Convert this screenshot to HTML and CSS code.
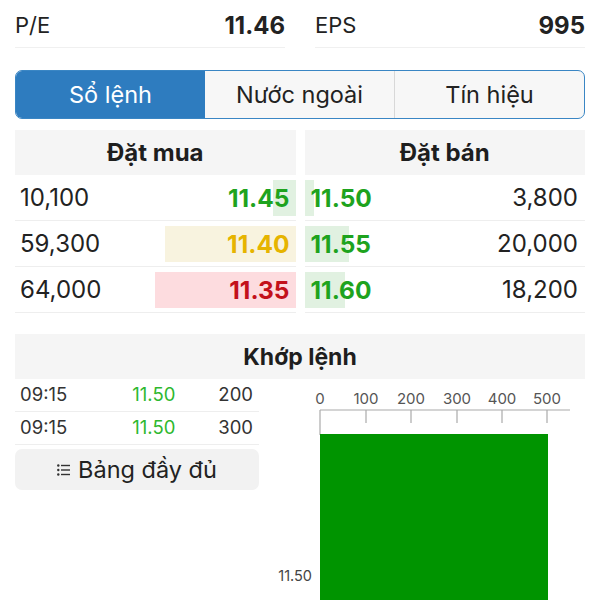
FILE: index.html
```html
<!DOCTYPE html>
<html lang="vi">
<head>
<meta charset="utf-8">
<title>Sổ lệnh</title>
<link rel="stylesheet" href="styles.css">
</head>
<body>
<div class="page">
  <div class="stats">
    <div class="stat"><span class="label">P/E</span><span class="value">11.46</span></div>
    <div class="stat"><span class="label">EPS</span><span class="value">995</span></div>
  </div>

  <div class="tabs">
    <div class="tab active">Sổ lệnh</div>
    <div class="tab">Nước ngoài</div>
    <div class="tab">Tín hiệu</div>
  </div>

  <div class="book">
    <div class="side bid">
      <div class="head">Đặt mua</div>
      <div class="row bar-green" style="--w:23px"><span class="qty">10,100</span><span class="price up">11.45</span></div>
      <div class="row bar-yellow" style="--w:131px"><span class="qty">59,300</span><span class="price ref">11.40</span></div>
      <div class="row bar-red" style="--w:141px"><span class="qty">64,000</span><span class="price down">11.35</span></div>
    </div>
    <div class="side ask">
      <div class="head">Đặt bán</div>
      <div class="row bar-green" style="--w:9px"><span class="price up">11.50</span><span class="qty">3,800</span></div>
      <div class="row bar-green" style="--w:44px"><span class="price up">11.55</span><span class="qty">20,000</span></div>
      <div class="row bar-green" style="--w:40px"><span class="price up">11.60</span><span class="qty">18,200</span></div>
    </div>
  </div>

  <div class="match">
    <div class="head">Khớp lệnh</div>
    <div class="match-body">
      <div class="trades">
        <div class="trade"><span class="time">09:15</span><span class="tp">11.50</span><span class="tq">200</span></div>
        <div class="trade"><span class="time">09:15</span><span class="tp">11.50</span><span class="tq">300</span></div>
        <button class="full">
          <svg class="list-icon" width="13" height="12" viewBox="0 0 13 12">
            <circle cx="1.3" cy="1.5" r="1.2" fill="#333"/>
            <circle cx="1.3" cy="6" r="1.2" fill="#333"/>
            <circle cx="1.3" cy="10.5" r="1.2" fill="#333"/>
            <rect x="4" y="0.8" width="9" height="1.4" fill="#333"/>
            <rect x="4" y="5.3" width="9" height="1.4" fill="#333"/>
            <rect x="4" y="9.8" width="9" height="1.4" fill="#333"/>
          </svg>
          <span>Bảng đầy đủ</span>
        </button>
      </div>
      <svg class="chart" width="315" height="222" viewBox="0 0 315 222">
        <g class="axis-labels" font-size="15" fill="#555" text-anchor="middle">
          <text x="50" y="25">0</text>
          <text x="96" y="25">100</text>
          <text x="141" y="25">200</text>
          <text x="187" y="25">300</text>
          <text x="232" y="25">400</text>
          <text x="277" y="25">500</text>
        </g>
        <g stroke="#aaa" stroke-width="1.2">
          <line x1="50" y1="31" x2="300" y2="31"/>
          <line x1="50" y1="31" x2="50" y2="56"/>
          <line x1="96" y1="31" x2="96" y2="44"/>
          <line x1="141" y1="31" x2="141" y2="44"/>
          <line x1="187" y1="31" x2="187" y2="44"/>
          <line x1="232" y1="31" x2="232" y2="44"/>
          <line x1="277" y1="31" x2="277" y2="44"/>
        </g>
        <rect x="50" y="55" width="228" height="170" fill="#009400"/>
        <text x="42" y="202" font-size="14.5" fill="#444" text-anchor="end">11.50</text>
      </svg>
    </div>
  </div>
</div>
</body>
</html>
```

FILE: styles.css
```css
* { box-sizing: border-box; }

html, body {
  margin: 0;
  padding: 0;
  background: #ffffff;
}

body {
  font-family: "Inter", "Roboto", sans-serif;
  color: #222;
  width: 600px;
  height: 600px;
  overflow: hidden;
}

.page {
  padding: 0 15px;
}

/* stats */
.stats {
  display: flex;
  gap: 30px;
}

.stat {
  flex: 1;
  height: 48px;
  display: flex;
  justify-content: space-between;
  align-items: center;
  border-bottom: 1px solid #f0f0f0;
  padding-top: 3px;
}

.stat .label {
  font-size: 22px;
  color: #222;
}

.stat .value {
  font-size: 24px;
  font-weight: 700;
  color: #222;
}

/* tabs */
.tabs {
  margin-top: 22px;
  display: flex;
  height: 49px;
  border: 1.5px solid #3a86c4;
  border-radius: 7px;
  overflow: hidden;
  background: #f7f7f7;
}

.tab {
  flex: 1;
  display: flex;
  align-items: center;
  justify-content: center;
  font-size: 23.5px;
  color: #222;
}

.tab + .tab {
  border-left: 1px solid #d8d8d8;
}

.tab.active {
  background: #2e7cbf;
  color: #fff;
}

.tab.active + .tab {
  border-left: none;
}

/* order book */
.book {
  margin-top: 11px;
  display: grid;
  grid-template-columns: 1fr 1fr;
  gap: 9px;
}

.head {
  height: 45px;
  background: #f5f5f5;
  display: flex;
  align-items: center;
  justify-content: center;
  font-size: 24px;
  font-weight: 700;
  color: #1e1e1e;
}

.row {
  height: 46px;
  border-bottom: 1px solid #eeeeee;
  display: flex;
  justify-content: space-between;
  align-items: center;
  font-size: 24px;
  background-repeat: no-repeat;
  background-size: var(--w) 36px;
}

.bid .row {
  background-position: right center;
  padding: 0 6px 0 5px;
}

.ask .row {
  background-position: left center;
  padding: 0 7px 0 6px;
}

.bar-green { background-image: linear-gradient(#e1f1e1, #e1f1e1); }
.bar-yellow { background-image: linear-gradient(#f8f3df, #f8f3df); }
.bar-red { background-image: linear-gradient(#fddcdf, #fddcdf); }

.qty {
  color: #222;
}

.price {
  font-weight: 700;
  font-size: 24.5px;
}

.up { color: #1ea31e; }
.ref { color: #e6b400; }
.down { color: #c3111b; }

/* match */
.match {
  margin-top: 21px;
}

.match .head {
  font-size: 23px;
}

.match-body {
  display: flex;
  gap: 11px;
}

.trades {
  width: 244px;
  flex: none;
}

.trade {
  display: grid;
  grid-template-columns: 1fr 1fr 1fr;
  height: 33px;
  align-items: center;
  padding: 0 6px 2px 5px;
  border-bottom: 1px solid #eeeeee;
  font-size: 18.5px;
  color: #333;
}

.trade .tp {
  text-align: right;
  color: #2eb82e;
}

.trade .tq {
  text-align: right;
}

.full {
  margin-top: 4px;
  width: 100%;
  height: 41px;
  border: none;
  border-radius: 7px;
  background: #f2f2f2;
  display: flex;
  align-items: center;
  justify-content: center;
  gap: 8px;
  font-family: inherit;
  font-size: 23.5px;
  color: #222;
  padding: 0;
}

.list-icon {
  display: block;
}

.chart {
  display: block;
  flex: none;
  font-family: "Inter", "Roboto", sans-serif;
}
```
